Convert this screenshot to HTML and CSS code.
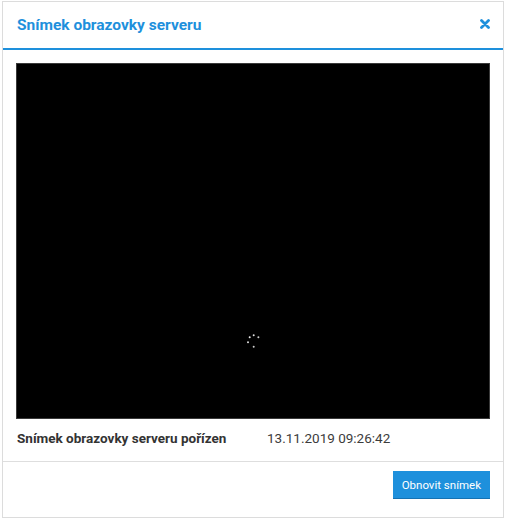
FILE: index.html
```html
<!DOCTYPE html>
<html lang="cs">
<head>
<meta charset="utf-8">
<title>Snímek obrazovky serveru</title>
<link rel="stylesheet" href="styles.css">
</head>
<body>
<div class="modal">
  <div class="modal-header">
    <h1 class="modal-title">Snímek obrazovky serveru</h1>
    <button class="close" aria-label="Zavřít">
      <svg width="10" height="10" viewBox="0 0 10 10"><path d="M1.5 1.5 L8.5 8.5 M8.5 1.5 L1.5 8.5" stroke="#1e90dc" stroke-width="2.8" stroke-linecap="round"/></svg>
    </button>
  </div>
  <div class="modal-body">
    <div class="screen">
      <svg class="spinner" width="20" height="20" viewBox="0 0 20 20">
        <circle cx="10.7" cy="4.2" r="1" fill="#ddd"/>
        <circle cx="15.4" cy="6.2" r="1" fill="#ccc"/>
        <circle cx="6.7" cy="6.2" r="1" fill="#eee"/>
        <circle cx="5" cy="11.2" r="1" fill="#ddd"/>
        <circle cx="10.7" cy="15.8" r="1" fill="#ccc"/>
      </svg>
    </div>
    <div class="info">
      <span class="info-label">Snímek obrazovky serveru pořízen</span>
      <span class="info-value">13.11.2019 09:26:42</span>
    </div>
  </div>
  <div class="modal-footer">
    <button class="btn">Obnovit snímek</button>
  </div>
</div>
</body>
</html>
```
FILE: styles.css
```css
html, body {
  margin: 0;
  padding: 0;
  background: #fff;
}
body {
  font-family: Roboto, "Liberation Sans", sans-serif;
}
.modal {
  box-sizing: border-box;
  width: 502px;
  margin: 1px 0 0 2px;
  border: 1px solid #dcdcdc;
  background: #fff;
}
.modal-header {
  height: 46px;
  display: flex;
  align-items: center;
  justify-content: space-between;
  padding: 0 13px 0 14px;
  border-bottom: 2px solid #1e90dc;
}
.modal-title {
  margin: 0;
  font-size: 15.5px;
  font-weight: 700;
  color: #1e90dc;
  line-height: 20px;
}
.close {
  border: 0;
  background: none;
  padding: 0;
  margin: -3px 0 0 0;
  width: 10px;
  height: 10px;
  display: flex;
  cursor: pointer;
}
.modal-body {
  padding: 13px 13px 13px 13px;
}
.screen {
  box-sizing: border-box;
  height: 356px;
  background: #000;
  border: 1px solid #3a3a3a;
  display: flex;
  flex-direction: column;
  justify-content: flex-end;
  align-items: center;
  padding-bottom: 67px;
}
.spinner {
  display: block;
}
.info {
  display: grid;
  grid-template-columns: 250px auto;
  margin-top: 9px;
  padding-left: 1px;
  font-size: 13.5px;
  line-height: 20px;
  color: #333;
}
.info-label {
  font-weight: 700;
}
.info-value {
  color: #3c3c3c;
}
.modal-footer {
  border-top: 1px solid #dedede;
  display: flex;
  justify-content: flex-end;
  padding: 9px 13px 18px;
}
.btn {
  height: 28px;
  padding: 0 9px;
  border: 0;
  border-bottom: 1px solid #1572b3;
  background: #1e90dc;
  color: #fff;
  font-family: Roboto, "Liberation Sans", sans-serif;
  font-size: 11.5px;
  cursor: pointer;
}
```
